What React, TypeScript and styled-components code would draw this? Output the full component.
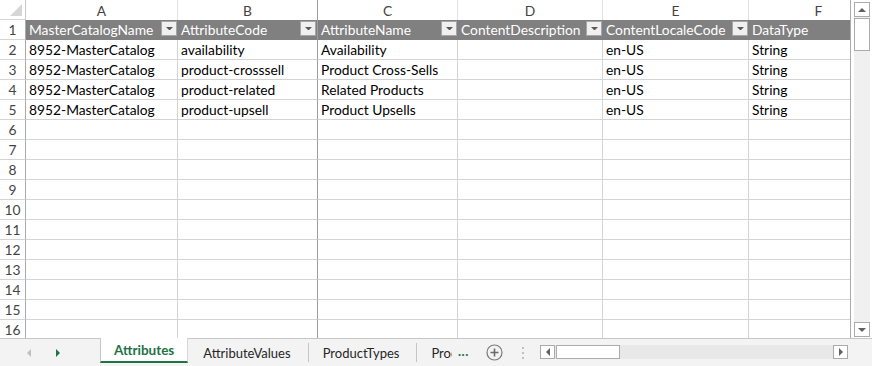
import React from 'react';
import styled, { createGlobalStyle, css } from 'styled-components';

const GREEN = '#217346';
const GRID = '#d4d4d4';
const EDGE = '#ababab';
const FREEZE = '#9c9c9c';

const GlobalStyle = createGlobalStyle`
  html, body {
    margin: 0;
    background: #fff;
  }
  body {
    font-family: Lato, "Liberation Sans", sans-serif;
  }
`;

const Window = styled.div`
  width: 872px;
  height: 366px;
  display: flex;
  flex-direction: column;
  overflow: hidden;
  background: #fff;
`;

const Main = styled.div`
  display: flex;
  height: 338px;
`;

const Sheet = styled.div`
  width: 850px;
  height: 338px;
  overflow: hidden;
  border-right: 1px solid ${EDGE};
`;

const Grid = styled.div`
  display: grid;
  grid-template-columns: 26px 152px 140px 140px 145px 146px 140px;
  grid-auto-rows: 20px;
  width: 889px;
  font-size: 13.8px;
`;

const Corner = styled.div`
  position: relative;
  border-right: 1px solid #c8c8c8;
  border-bottom: 1px solid ${GRID};
  &::after {
    content: '';
    position: absolute;
    right: 3px;
    bottom: 3px;
    border-style: solid;
    border-width: 0 0 12px 12px;
    border-color: transparent transparent #d6d6d6 transparent;
  }
`;

const ColHead = styled.div<{ $freeze?: boolean }>`
  display: flex;
  align-items: center;
  justify-content: center;
  color: #444;
  line-height: 19px;
  border-right: 1px solid ${(p) => (p.$freeze ? FREEZE : '#e1e1e1')};
  padding-top: 1px;
`;

const RowNum = styled.div`
  display: flex;
  justify-content: center;
  color: #444;
  line-height: 19px;
  border-right: 1px solid ${EDGE};
  border-bottom: 1px solid ${GRID};
`;

const HeadCell = styled.div<{ $freeze?: boolean }>`
  display: flex;
  align-items: flex-start;
  justify-content: space-between;
  background: #808080;
  color: #fff;
  line-height: 19px;
  padding-left: 3px;
  border-bottom: 1px solid #808080;
  overflow: hidden;
  white-space: nowrap;
  ${(p) =>
    p.$freeze &&
    css`
      border-right: 1px solid ${FREEZE};
    `}
`;

const FilterButton = styled.div`
  flex: none;
  width: 14px;
  height: 13px;
  margin: 1px 1px 0 4px;
  background: #f0f0f0;
  border: 1px solid #a6a6a6;
  display: flex;
  align-items: center;
  justify-content: center;
`;

const Cell = styled.div<{ $freeze?: boolean }>`
  line-height: 19px;
  padding-left: 3px;
  color: #000;
  white-space: nowrap;
  overflow: hidden;
  border-right: 1px solid ${(p) => (p.$freeze ? FREEZE : GRID)};
  border-bottom: 1px solid ${GRID};
`;

const VScroll = styled.div`
  width: 16px;
  margin: 2px 2px 1px 3px;
  background: #f0f0f0;
  display: flex;
  flex-direction: column;
`;

const ScrollButton = styled.div<{ $w?: number; $h?: number }>`
  box-sizing: border-box;
  width: ${(p) => p.$w ?? 16}px;
  height: ${(p) => p.$h ?? 15}px;
  flex: none;
  background: #fff;
  border: 1px solid ${EDGE};
  display: flex;
  align-items: center;
  justify-content: center;
`;

const VThumb = styled.div`
  box-sizing: border-box;
  height: 33px;
  margin-top: 1px;
  background: #fff;
  border: 1px solid ${EDGE};
`;

const Spacer = styled.div`
  flex: 1;
`;

const TabBar = styled.div`
  height: 27px;
  display: flex;
  align-items: flex-start;
  background: #f3f3f3;
  border-top: 1px solid #c6c6c6;
  font-size: 13px;
  color: #262626;
`;

const Nav = styled.div`
  width: 100px;
  height: 27px;
  flex: none;
  display: flex;
  align-items: center;
  gap: 25px;
  padding-left: 27px;
  box-sizing: border-box;
`;

const Tabs = styled.div`
  width: 352px;
  height: 27px;
  display: flex;
  align-items: center;
  overflow: hidden;
  flex: none;
  margin-top: -1px;
`;

const Tab = styled.div<{ $active?: boolean; $sep?: boolean }>`
  flex: none;
  white-space: nowrap;
  box-sizing: border-box;
  padding: 0 13px;
  display: flex;
  align-items: center;
  ${(p) =>
    p.$active
      ? css`
          align-self: flex-start;
          height: 25px;
          padding-top: 1px;
          background: #fff;
          color: ${GREEN};
          font-weight: 700;
          font-size: 13.5px;
          border-left: 1px solid #c6c6c6;
          border-right: 1px solid #d8d8d8;
          border-bottom: 2px solid ${GREEN};
        `
      : css`
          height: 19px;
          margin-top: 2px;
          padding: 0 17px 0 14px;
          border-left: 1px solid ${p.$sep ? '#c6c6c6' : 'transparent'};
        `}
`;

const More = styled.div`
  width: 30px;
  flex: none;
  padding-left: 6px;
  box-sizing: border-box;
  color: ${GREEN};
  font-weight: 700;
  line-height: 24px;
  letter-spacing: 0.5px;
`;

const AddSheet = styled.div`
  width: 20px;
  height: 27px;
  flex: none;
  margin-left: 4px;
  display: flex;
  align-items: center;
`;

const Splitter = styled.div`
  width: 34px;
  height: 27px;
  flex: none;
  display: flex;
  flex-direction: column;
  align-items: center;
  justify-content: center;
  gap: 3px;
  span {
    width: 2px;
    height: 2px;
    background: #c0c0c0;
  }
`;

const HScroll = styled.div`
  width: 308px;
  height: 14px;
  flex: none;
  margin-top: 6px;
  background: #e8e8e8;
  display: flex;
`;

const HThumb = styled.div`
  box-sizing: border-box;
  width: 64px;
  height: 14px;
  margin-left: 1px;
  background: #fff;
  border: 1px solid ${EDGE};
`;

const Tri = ({ dir, color = '#606060', size = 4 }: { dir: 'up' | 'down' | 'left' | 'right'; color?: string; size?: number }) => {
  const s = size;
  const pts = {
    up: `0,${s} ${s},0 ${s * 2},${s}`,
    down: `0,0 ${s * 2},0 ${s},${s}`,
    left: `${s},0 ${s},${s * 2} 0,${s}`,
    right: `0,0 0,${s * 2} ${s},${s}`,
  }[dir];
  const vertical = dir === 'up' || dir === 'down';
  return (
    <svg width={vertical ? s * 2 : s} height={vertical ? s : s * 2} style={{ display: 'block' }}>
      <polygon points={pts} fill={color} />
    </svg>
  );
};

const headers = ['MasterCatalogName', 'AttributeCode', 'AttributeName', 'ContentDescription', 'ContentLocaleCode', 'DataType'];
const letters = ['A', 'B', 'C', 'D', 'E', 'F'];

const rows: string[][] = [
  ['8952-MasterCatalog', 'availability', 'Availability', '', 'en-US', 'String'],
  ['8952-MasterCatalog', 'product-crosssell', 'Product Cross-Sells', '', 'en-US', 'String'],
  ['8952-MasterCatalog', 'product-related', 'Related Products', '', 'en-US', 'String'],
  ['8952-MasterCatalog', 'product-upsell', 'Product Upsells', '', 'en-US', 'String'],
];

const FREEZE_COL = 1;

export default function App() {
  const body: string[][] = [];
  for (let r = 2; r <= 16; r++) body.push(rows[r - 2] ?? ['', '', '', '', '', '']);

  return (
    <Window>
      <GlobalStyle />
      <Main>
        <Sheet>
          <Grid>
            <Corner />
            {letters.map((l, i) => (
              <ColHead key={l} $freeze={i === FREEZE_COL}>
                {l}
              </ColHead>
            ))}

            <RowNum>1</RowNum>
            {headers.map((h, i) => (
              <HeadCell key={h} $freeze={i === FREEZE_COL}>
                <span>{h}</span>
                {i < 5 && (
                  <FilterButton>
                    <Tri dir="down" color="#595959" size={3.5} />
                  </FilterButton>
                )}
              </HeadCell>
            ))}

            {body.map((cells, r) => (
              <React.Fragment key={r}>
                <RowNum>{r + 2}</RowNum>
                {cells.map((c, i) => (
                  <Cell key={i} $freeze={i === FREEZE_COL}>
                    {c}
                  </Cell>
                ))}
              </React.Fragment>
            ))}
          </Grid>
        </Sheet>
        <VScroll>
          <ScrollButton>
            <Tri dir="up" />
          </ScrollButton>
          <VThumb />
          <Spacer />
          <ScrollButton>
            <Tri dir="down" />
          </ScrollButton>
        </VScroll>
      </Main>

      <TabBar>
        <Nav>
          <Tri dir="left" color="#c0c0c0" size={4} />
          <Tri dir="right" color={GREEN} size={4} />
        </Nav>
        <Tabs>
          <Tab $active>Attributes</Tab>
          <Tab>AttributeValues</Tab>
          <Tab $sep>ProductTypes</Tab>
          <Tab $sep>ProductTypeAttributes</Tab>
        </Tabs>
        <More>...</More>
        <AddSheet>
          <svg width="17" height="17" viewBox="0 0 17 17">
            <circle cx="8.5" cy="8.5" r="7.5" fill="none" stroke="#7a7a7a" strokeWidth="1.2" />
            <path d="M8.5 4.5v8M4.5 8.5h8" stroke="#6a6a6a" strokeWidth="1.6" />
          </svg>
        </AddSheet>
        <Splitter>
          <span />
          <span />
          <span />
        </Splitter>
        <HScroll>
          <ScrollButton $w={15} $h={14}>
            <Tri dir="left" size={4} />
          </ScrollButton>
          <HThumb />
          <Spacer />
          <ScrollButton $w={15} $h={14}>
            <Tri dir="right" size={4} />
          </ScrollButton>
        </HScroll>
      </TabBar>
    </Window>
  );
}
